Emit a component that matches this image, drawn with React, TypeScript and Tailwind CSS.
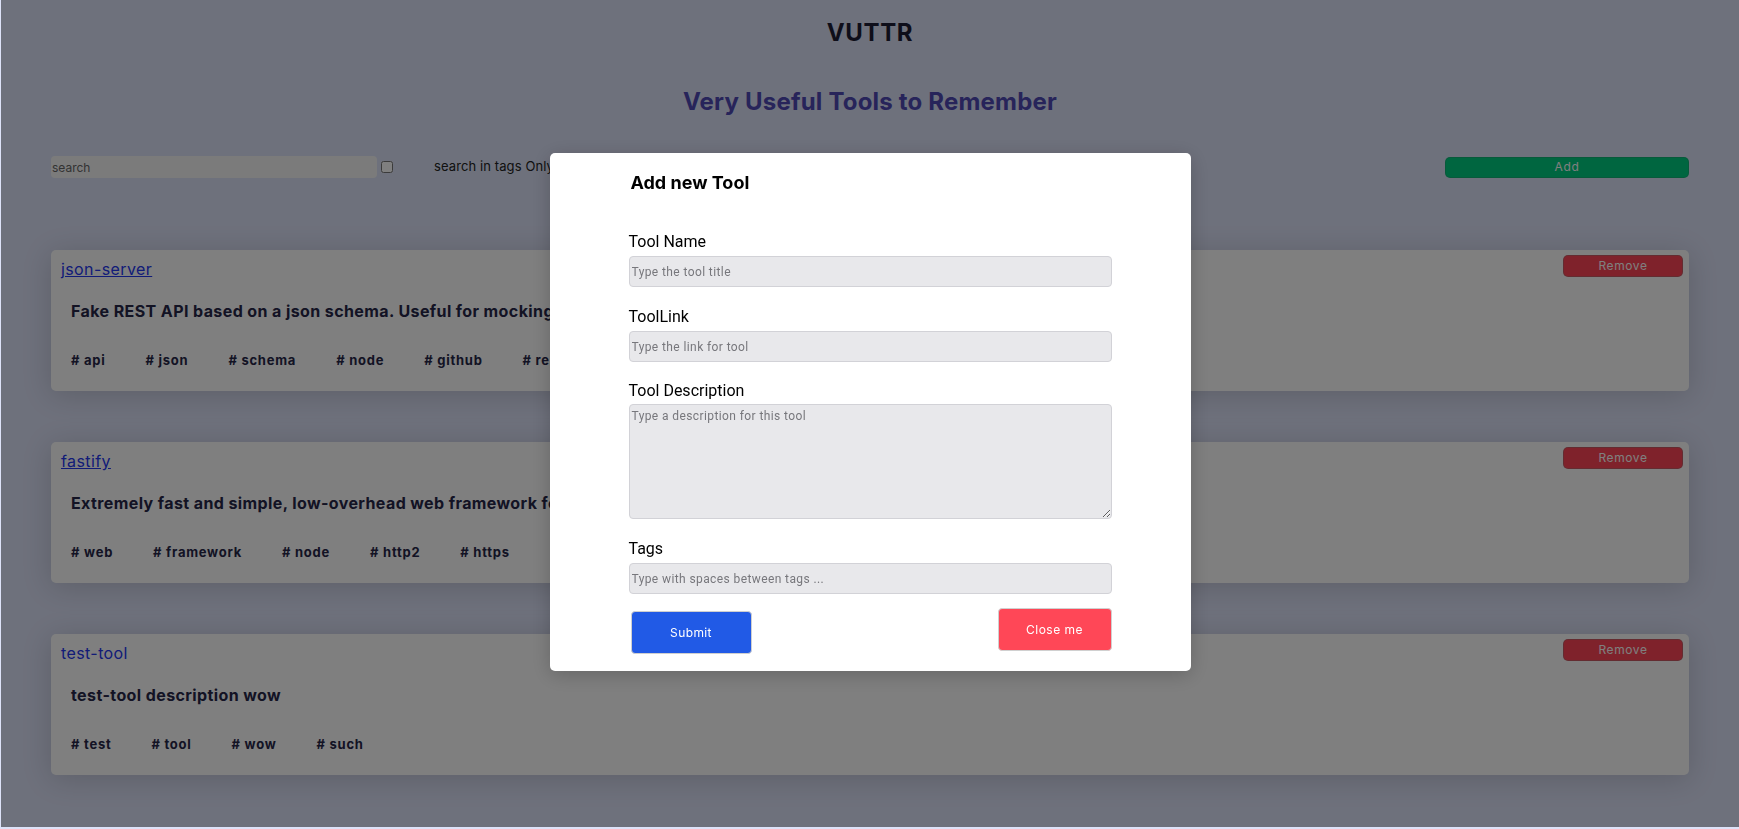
import { useState } from 'react';

interface Tool {
  id: number;
  title: string;
  link: string;
  description: string;
  tags: string[];
  underline: boolean;
}

const tools: Tool[] = [
  {
    id: 1,
    title: 'json-server',
    link: 'https://github.com/typicode/json-server',
    description:
      'Fake REST API based on a json schema. Useful for mocking and creating APIs for front-end devs to consume in coding challenges.',
    tags: ['api', 'json', 'schema', 'node', 'github', 'rest'],
    underline: true,
  },
  {
    id: 2,
    title: 'fastify',
    link: 'https://www.fastify.io/',
    description:
      'Extremely fast and simple, low-overhead web framework for NodeJS. Supports HTTP2.',
    tags: ['web', 'framework', 'node', 'http2', 'https'],
    underline: true,
  },
  {
    id: 3,
    title: 'test-tool',
    link: '',
    description: 'test-tool description wow',
    tags: ['test', 'tool', 'wow', 'such'],
    underline: false,
  },
];

const inter = { fontFamily: 'Inter, "Noto Sans", sans-serif' };
const roboto = { fontFamily: 'Roboto, "Liberation Sans", sans-serif' };

function ToolCard({ tool }: { tool: Tool }) {
  return (
    <div className="bg-white rounded-[5px] shadow-[0_4px_30px_rgba(0,0,0,0.16)] pt-[5px] pb-[22px] pl-[10px] pr-[6px]">
      <div className="flex justify-between items-start">
        <a
          href={tool.link || undefined}
          className={`mt-[2px] text-[16px] leading-6 tracking-[0.4px] text-[#2438f0] ${tool.underline ? 'underline' : 'no-underline'}`}
        >
          {tool.title}
        </a>
        <button className="w-[120px] h-[22px] rounded-[5px] bg-[#ff4556] border border-[#777]/40 text-white text-[12px] tracking-[0.6px]">
          Remove
        </button>
      </div>
      <p className="mt-[18px] pl-[10px] text-[16px] leading-6 font-bold tracking-[0.4px] text-[#262648] whitespace-nowrap overflow-hidden">
        {tool.description}
      </p>
      <div className="mt-[28px] pl-[10px] flex text-[13px] leading-[18px] font-bold tracking-[0.75px] text-[#262648]">
        {tool.tags.map((t) => (
          <span key={t} className="mr-[40px]">
            # {t}
          </span>
        ))}
      </div>
    </div>
  );
}

function Field({ label, placeholder, className = '' }: { label: string; placeholder: string; className?: string }) {
  return (
    <div className={`flex flex-col ${className}`}>
      <label className="text-[16px] leading-6 text-black" style={roboto}>
        {label}
      </label>
      <input
        placeholder={placeholder}
        className="mt-[2px] h-[31px] w-full rounded-[4px] bg-[#e8e8eb] border border-[#d2d2d7] pl-[2px] text-[12px] tracking-[0.4px] placeholder:text-[#77777c] outline-none"
        style={roboto}
      />
    </div>
  );
}

export default function App() {
  const [open] = useState(true);

  return (
    <div className="min-h-screen bg-[#dde2f8] relative" style={inter}>
      <div className="pt-[17px] pl-[51px] pr-[50px] pb-[40px]">
        <h1 className="text-center text-[24px] leading-8 font-bold tracking-[0.6px] text-[#1c1c35]">VUTTR</h1>
        <h2 className="mt-[37px] text-center text-[24px] leading-8 font-bold tracking-[0.2px] text-[#4f48b4]">
          Very Useful Tools to Remember
        </h2>

        <div className="mt-[38px] flex items-center h-[22px]">
          <input
            placeholder="search"
            className="w-[326px] h-[22px] rounded-[4px] bg-[#f7f7f7] pl-[1px] text-[12px] placeholder:text-[#666] outline-none"
          />
          <input type="checkbox" className="ml-[4px] w-[12px] h-[12px]" />
          <span className="ml-[41px] text-[13px] text-[#222] tracking-[0.1px]">search in tags Only</span>
          <button className="ml-auto w-[244px] h-[21px] rounded-[5px] bg-[#00cc80] border border-[#555]/20 text-white text-[12px] tracking-[0.6px]">
            Add
          </button>
        </div>

        <div className="mt-[72px] flex flex-col gap-[51px]">
          {tools.map((t) => (
            <ToolCard key={t.id} tool={t} />
          ))}
        </div>
      </div>

      {open && (
        <div className="fixed top-0 right-0 left-[1px] bottom-[2px] bg-black/50 flex justify-center items-start pt-[153px]">
          <div className="w-[641px] bg-white rounded-[5px] shadow-[0_4px_20px_rgba(0,0,0,0.2)] pt-[18px] pb-[17px] pl-[79px] pr-[79px]">
            <h3 className="pl-[2px] text-[18px] leading-6 font-bold text-black">Add new Tool</h3>

            <div className="mt-[35px] flex flex-col">
              <Field label="Tool Name" placeholder="Type the tool title" />
              <Field className="mt-[18px]" label="ToolLink" placeholder="Type the link for tool" />
              <div className="mt-[17px] flex flex-col">
                <label className="text-[16px] leading-6 text-black" style={roboto}>
                  Tool Description
                </label>
                <textarea
                  placeholder="Type a description for this tool"
                  className="mt-[1px] h-[115px] w-full rounded-[4px] bg-[#e8e8eb] border border-[#d2d2d7] pl-[2px] pt-[2px] text-[12px] tracking-[0.4px] placeholder:text-[#77777c] outline-none"
                  style={roboto}
                />
              </div>
              <Field className="mt-[18px]" label="Tags" placeholder="Type with spaces between tags ..." />
            </div>

            <div className="mt-[14px] flex justify-between items-start">
              <button className="mt-[3px] ml-[2px] w-[121px] h-[43px] rounded-[4px] bg-[#215ae6] border border-[#cfcfcf] text-white text-[12px] tracking-[0.4px]">
                Submit
              </button>
              <button className="w-[114px] h-[43px] rounded-[4px] bg-[#ff4757] border border-[#d0d0d0] text-white text-[12px] tracking-[0.5px]">
                Close me
              </button>
            </div>
          </div>
        </div>
      )}
    </div>
  );
}
